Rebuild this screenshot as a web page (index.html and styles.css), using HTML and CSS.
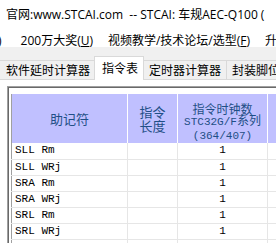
FILE: index.html
```html
<!DOCTYPE html>
<html lang="zh-CN">
<head>
<meta charset="utf-8">
<link rel="stylesheet" href="styles.css">
</head>
<body>
<div class="app">
  <div class="titlebar">官网:www.STCAI.com&nbsp; -- STCAI: 车规AEC-Q100 (</div>
  <div class="menubar">
    <span class="mi cut">)</span>
    <span class="mi">200万大奖(<u>U</u>)</span>
    <span class="mi">视频教学/技术论坛/选型(<u>F</u>)</span>
    <span class="mi">升级</span>
  </div>
  <div class="tabs">
    <div class="tab first">软件延时计算器</div>
    <div class="tab active">指令表</div>
    <div class="tab">定时器计算器</div>
    <div class="tab">封装脚位</div>
  </div>
  <div class="panel">
    <div class="frame">
      <table class="grid">
        <colgroup>
          <col class="c1"><col class="c2"><col class="c3"><col class="c4">
        </colgroup>
        <thead>
          <tr>
            <th class="h-big">助记符</th>
            <th class="h-big">指令<br>长度</th>
            <th class="h-small"><div class="h3">指令时钟数<br><span class="mono">STC32G/F</span>系列<br><span class="mono">(364/407)</span></div></th>
            <th></th>
          </tr>
        </thead>
        <tbody>
          <tr><td class="mn">SLL Rm</td><td></td><td class="num">1</td><td></td></tr>
          <tr><td class="mn">SLL WRj</td><td></td><td class="num">1</td><td></td></tr>
          <tr><td class="mn">SRA Rm</td><td></td><td class="num">1</td><td></td></tr>
          <tr><td class="mn">SRA WRj</td><td></td><td class="num">1</td><td></td></tr>
          <tr><td class="mn">SRL Rm</td><td></td><td class="num">1</td><td></td></tr>
          <tr><td class="mn">SRL WRj</td><td></td><td class="num">1</td><td></td></tr>
          <tr><td class="mn">&nbsp;</td><td></td><td class="num"></td><td></td></tr>
        </tbody>
      </table>
    </div>
  </div>
</div>
</body>
</html>
```
FILE: styles.css
```css
html, body {
  margin: 0;
  padding: 0;
  background: #ffffff;
}
body {
  width: 276px;
  height: 243px;
  overflow: hidden;
  font-family: "Open Sans", "Noto Sans CJK SC", sans-serif;
  font-size: 12px;
  color: #000;
}
.app {
  width: 276px;
  height: 243px;
  overflow: hidden;
  display: flex;
  flex-direction: column;
}
.titlebar {
  flex: none;
  height: 26px;
  padding: 6px 0 0 6px;
  box-sizing: border-box;
  line-height: 18px;
  white-space: nowrap;
  background: #fff;
}
.menubar {
  flex: none;
  height: 21px;
  padding-top: 6px;
  box-sizing: border-box;
  line-height: 18px;
  white-space: nowrap;
  display: flex;
  gap: 15px;
  background: #fff;
}
.menubar .cut {
  margin-left: -2px;
  margin-right: 4px;
}
.menubar u {
  text-decoration: underline;
  text-underline-offset: 1px;
}
.tabs {
  flex: none;
  height: 33px;
  box-sizing: border-box;
  background: #f0f0f0;
  display: flex;
  align-items: flex-end;
  white-space: nowrap;
  border-bottom: 1px solid #d9d9d9;
  font-family: "Noto Sans CJK SC", sans-serif;
}
.tab {
  flex: none;
  height: 19px;
  line-height: 18px;
  padding: 0 5px;
  box-sizing: border-box;
  border: 1px solid #d9d9d9;
  border-bottom: none;
  margin-left: -1px;
  background: #f0f0f0;
  font-size: 12px;
}
.tab.first {
  padding-left: 6px;
  padding-right: 4px;
}
.tab.active {
  height: 24px;
  line-height: 22px;
  padding: 0 5px 0 7px;
  background: #ffffff;
  margin-bottom: -1px;
  position: relative;
  z-index: 1;
}
.panel {
  flex: 1;
  min-height: 0;
  overflow: hidden;
  background: #ffffff;
  padding: 6px 0 0 7px;
}
.frame {
  height: 100%;
  border-top: 1px solid #a0a0a0;
  border-left: 1px solid #a0a0a0;
  box-sizing: border-box;
  padding: 7px 0 0 3px;
  box-shadow: inset 1px 1px 0 #696969;
}
.grid {
  border-collapse: collapse;
  table-layout: fixed;
  width: 290px;
  border-left: 1px solid #a0a0a0;
}
.c1 { width: 116px; }
.c2 { width: 50px; }
.c3 { width: 90px; }
.c4 { width: 34px; }
.grid th {
  background: #c0c0ff;
  height: 49px;
  padding: 0;
  border-right: 1px solid #ffffff;
  color: #1f4f86;
  font-family: "Noto Sans CJK SC", sans-serif;
  font-weight: normal;
  vertical-align: middle;
  text-align: center;
}
.h-big {
  font-size: 13px;
  line-height: 14px;
}
.grid th.h-small {
  font-size: 12px;
  line-height: 11px;
}
.h3 {
  padding-top: 7px;
}
.mono {
  font-family: "Liberation Mono", monospace;
  font-size: 11px;
}
.grid td {
  height: 16px;
  padding: 0;
  border-right: 1px solid #e6e6e6;
  border-bottom: 1px solid #e6e6e6;
  font-family: "Liberation Mono", monospace;
  font-size: 11px;
  line-height: 15px;
  box-sizing: border-box;
}
.grid td.mn {
  padding-left: 3px;
}
.grid td.num {
  text-align: center;
}
```
